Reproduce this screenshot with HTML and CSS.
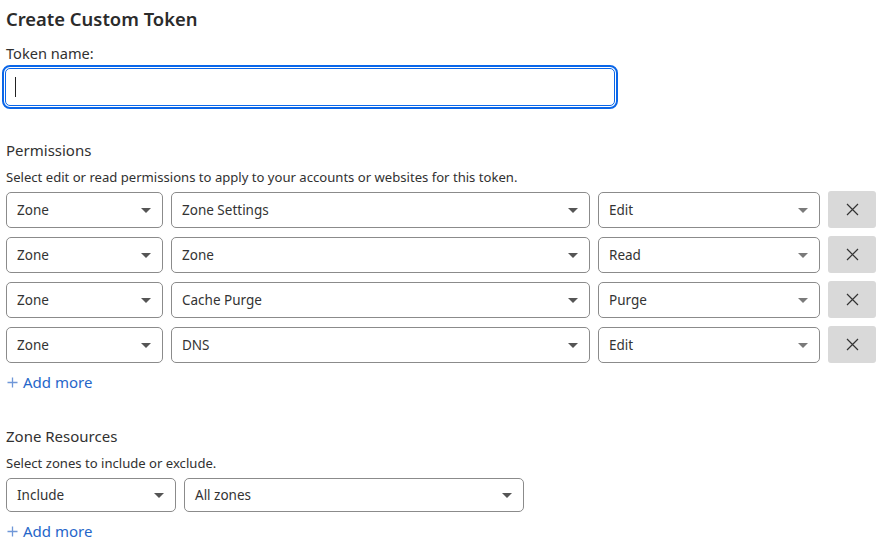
FILE: index.html
```html
<!DOCTYPE html>
<html>
<head>
<meta charset="utf-8">
<link rel="stylesheet" href="styles.css">
</head>
<body>
<div class="page">
  <h1 class="title">Create Custom Token</h1>
  <label class="label">Token name:</label>
  <div class="input"><span class="caret"></span></div>

  <h2 class="section">Permissions</h2>
  <p class="desc">Select edit or read permissions to apply to your accounts or websites for this token.</p>
  <div class="perm-grid">
    <div class="sel"><span>Zone</span><i class="tri"></i></div>
    <div class="sel"><span>Zone Settings</span><i class="tri"></i></div>
    <div class="sel"><span>Edit</span><i class="tri light"></i></div>
    <button class="remove"><svg width="13" height="13" viewBox="0 0 13 13"><path d="M1 1L12 12M12 1L1 12" stroke="#333" stroke-width="1.2" fill="none"/></svg></button>

    <div class="sel"><span>Zone</span><i class="tri"></i></div>
    <div class="sel"><span>Zone</span><i class="tri"></i></div>
    <div class="sel"><span>Read</span><i class="tri light"></i></div>
    <button class="remove"><svg width="13" height="13" viewBox="0 0 13 13"><path d="M1 1L12 12M12 1L1 12" stroke="#333" stroke-width="1.2" fill="none"/></svg></button>

    <div class="sel"><span>Zone</span><i class="tri"></i></div>
    <div class="sel"><span>Cache Purge</span><i class="tri"></i></div>
    <div class="sel"><span>Purge</span><i class="tri light"></i></div>
    <button class="remove"><svg width="13" height="13" viewBox="0 0 13 13"><path d="M1 1L12 12M12 1L1 12" stroke="#333" stroke-width="1.2" fill="none"/></svg></button>

    <div class="sel"><span>Zone</span><i class="tri"></i></div>
    <div class="sel"><span>DNS</span><i class="tri"></i></div>
    <div class="sel"><span>Edit</span><i class="tri light"></i></div>
    <button class="remove"><svg width="13" height="13" viewBox="0 0 13 13"><path d="M1 1L12 12M12 1L1 12" stroke="#333" stroke-width="1.2" fill="none"/></svg></button>
  </div>
  <a class="add"><svg class="plus" width="11" height="11" viewBox="0 0 11 11"><path d="M5.5 0.5V10.5M0.5 5.5H10.5" stroke="#6f97d8" stroke-width="1.3" fill="none"/></svg>Add more</a>

  <h2 class="section section2">Zone Resources</h2>
  <p class="desc">Select zones to include or exclude.</p>
  <div class="zone-grid">
    <div class="sel"><span>Include</span><i class="tri"></i></div>
    <div class="sel"><span>All zones</span><i class="tri"></i></div>
  </div>
  <a class="add add2"><svg class="plus" width="11" height="11" viewBox="0 0 11 11"><path d="M5.5 0.5V10.5M0.5 5.5H10.5" stroke="#6f97d8" stroke-width="1.3" fill="none"/></svg>Add more</a>
</div>
</body>
</html>
```
FILE: styles.css
```css
* { box-sizing: border-box; }
html, body { margin: 0; padding: 0; background: #fff; }
body {
  font-family: "Noto Sans", "Open Sans", sans-serif;
  color: #313131;
}
.page {
  padding: 4px 0 0 6px;
  display: flex;
  flex-direction: column;
  align-items: flex-start;
}
.title {
  margin: 0;
  font-size: 18.4px;
  font-weight: 600;
  line-height: 30px;
  color: #2b2b2b;
}
.label {
  margin-top: 9px;
  font-size: 14.6px;
  line-height: 20px;
}
.input {
  margin-top: 5px;
  margin-left: -1px;
  width: 610px;
  height: 38px;
  border: 1px solid #0a66e8;
  border-radius: 5px;
  outline: 2px solid #0a66e8;
  outline-offset: 1px;
  display: flex;
  align-items: center;
  padding-left: 9px;
}
.caret {
  width: 1px;
  height: 20px;
  background: #222;
}
.section {
  margin: 34px 0 0 0;
  font-size: 15px;
  font-weight: 400;
  line-height: 20px;
}
.section2 { margin-top: 33px; }
.desc {
  margin: 9px 0 0 0;
  font-size: 13.1px;
  line-height: 16px;
}
.perm-grid {
  margin-top: 7px;
  display: grid;
  grid-template-columns: 157px 419px 222px 48px;
  grid-auto-rows: 36px;
  column-gap: 8px;
  row-gap: 9px;
}
.sel {
  border: 1px solid #8b8b8b;
  border-radius: 5px;
  display: flex;
  align-items: center;
  justify-content: space-between;
  padding: 0 11px 0 10px;
  font-size: 13.5px;
  color: #333;
  background: #fff;
}
.tri {
  width: 0; height: 0;
  border-left: 5px solid transparent;
  border-right: 5px solid transparent;
  border-top: 5px solid #555;
}
.tri.light { border-top-color: #7a7a7a; }
.remove {
  border: 0;
  border-radius: 3px;
  background: #d9d9d9;
  display: flex;
  align-items: center;
  justify-content: center;
  padding: 0;
  height: 37px;
  margin-top: -1px;
}
.add {
  margin-top: 8px;
  margin-left: 1px;
  font-size: 15px;
  color: #2566c9;
  line-height: 22px;
  display: flex;
  align-items: center;
}
.plus {
  margin-right: 5px;
}
.zone-grid {
  margin-top: 7px;
  display: grid;
  grid-template-columns: 170px 340px;
  grid-auto-rows: 34px;
  column-gap: 8px;
}
.add2 { margin-top: 8px; }
```
